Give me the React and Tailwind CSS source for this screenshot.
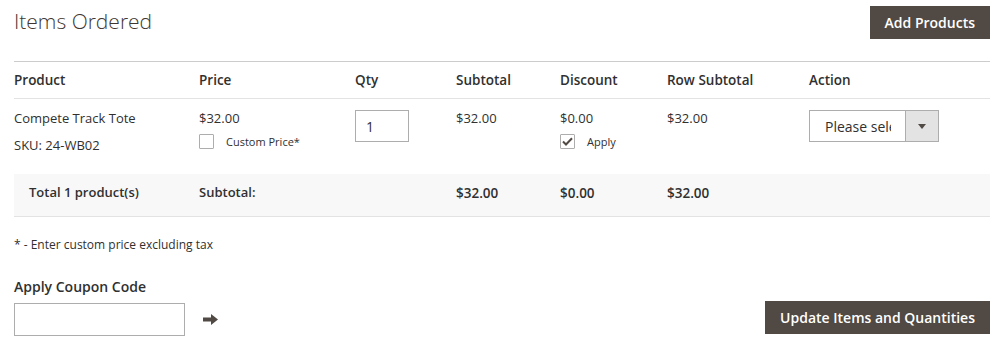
import { useState } from 'react';

const cols = 'grid grid-cols-[185px_156px_101px_104px_107px_142px_181px]';

const Check = ({ checked }) => (
    <span className="w-[15px] h-[15px] border border-[#adadad] bg-white flex items-center justify-center rounded-[1px]">
        {checked && (
            <svg width="11" height="9" viewBox="0 0 11 9">
                <path d="M1 4.5 L4 7.5 L10 1.2" fill="none" stroke="#514943" strokeWidth="2" />
            </svg>
        )}
    </span>
);

const App = () => {
    const [qty, setQty] = useState('1');
    const [coupon, setCoupon] = useState('');

    return (
        <div className="w-[1006px] h-[350px] bg-white text-[#303030] px-[14px] pt-[6px] font-['Open_Sans',sans-serif] overflow-hidden">
            {/* title bar */}
            <div className="w-[976px] flex justify-between items-start">
                <h2 className="text-[21px] font-light text-[#41362f] leading-[28px] mt-[1px]">Items Ordered</h2>
                <button className="h-[33px] px-[15px] bg-[#514943] text-white text-[14px] font-semibold">Add Products</button>
            </div>

            {/* table */}
            <div className="w-[976px] mt-[22px] text-[13px]">
                <div className={`${cols} h-[38px] items-center border-t border-b border-t-[#cccccc] border-b-[#e3e3e3] text-[13.5px] font-semibold`}>
                    <div>Product</div>
                    <div>Price</div>
                    <div>Qty</div>
                    <div>Subtotal</div>
                    <div>Discount</div>
                    <div>Row Subtotal</div>
                    <div>Action</div>
                </div>

                <div className={`${cols} h-[75px] pt-[10px]`}>
                    <div className="leading-[19px]">
                        <div>Compete Track Tote</div>
                        <div className="mt-[8px]">SKU: 24-WB02</div>
                    </div>
                    <div className="leading-[19px]">
                        <div>$32.00</div>
                        <label className="flex items-center gap-[12px] mt-[4px] text-[11px]">
                            <Check />
                            <span>Custom Price*</span>
                        </label>
                    </div>
                    <div>
                        <input
                            value={qty}
                            onChange={(e) => setQty(e.target.value)}
                            className="w-[54px] h-[32px] border border-[#adadad] px-[10px] text-[14px] text-[#303030] outline-none mt-[1px]"
                        />
                    </div>
                    <div className="leading-[19px]">$32.00</div>
                    <div className="leading-[19px]">
                        <div>$0.00</div>
                        <label className="flex items-center gap-[12px] mt-[4px] text-[11px]">
                            <Check checked />
                            <span>Apply</span>
                        </label>
                    </div>
                    <div className="leading-[19px]">$32.00</div>
                    <div>
                        {/* select text is clipped by the box, as in the admin UI */}
                        <div className="flex w-[130px] h-[32px] border border-[#adadad] mt-[1px]">
                            <div className="flex-1 flex items-center pl-[15px] pr-[14px] text-[14px] overflow-hidden whitespace-nowrap">
                                <span className="block overflow-hidden">Please select</span>
                            </div>
                            <div className="w-[33px] shrink-0 border-l border-[#adadad] bg-[#e3e3e3] flex items-center justify-center">
                                <svg width="8" height="5" viewBox="0 0 8 5"><path d="M0 0 H8 L4 5 Z" fill="#514943" /></svg>
                            </div>
                        </div>
                    </div>
                </div>

                <div className={`${cols} h-[43px] items-center pb-[4px] bg-[#f8f8f8] border-b border-[#e3e3e3] font-semibold`}>
                    <div className="pl-[15px]">Total 1 product(s)</div>
                    <div>Subtotal:</div>
                    <div></div>
                    <div className="text-[13.5px]">$32.00</div>
                    <div className="text-[13.5px]">$0.00</div>
                    <div className="text-[13.5px]">$32.00</div>
                    <div></div>
                </div>
            </div>

            <p className="text-[12px] mt-[20px] leading-[16px]">* - Enter custom price excluding tax</p>

            {/* coupon + update */}
            <div className="w-[976px] flex justify-between items-end mt-[24px]">
                <div>
                    <div className="text-[14px] font-semibold leading-[20px]">Apply Coupon Code</div>
                    <div className="flex items-center mt-[6px]">
                        <input
                            value={coupon}
                            onChange={(e) => setCoupon(e.target.value)}
                            className="w-[171px] h-[33px] border border-[#adadad] px-[10px] text-[14px] outline-none"
                        />
                        <svg className="ml-[18px]" width="15" height="11" viewBox="0 0 15 11">
                            <path d="M0 3.5 H8 V0 L15 5.5 L8 11 V7.5 H0 Z" fill="#514943" />
                        </svg>
                    </div>
                </div>
                <button className="h-[33px] px-[15px] bg-[#514943] text-white text-[14px] font-semibold mb-[2px]">Update Items and Quantities</button>
            </div>
        </div>
    );
};

export default App;
